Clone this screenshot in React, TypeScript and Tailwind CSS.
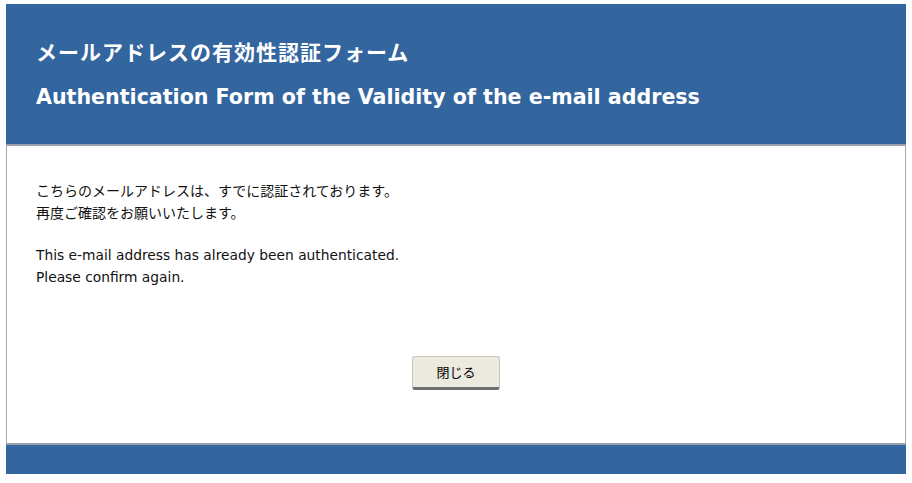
export default function App() {
  return (
    <div className="min-h-screen bg-white pt-[4px] pl-[6px]" style={{ fontFamily: '"DejaVu Sans", Verdana, "Noto Sans CJK JP", sans-serif' }}>
      <div className="w-[900px]">
        {/* Header */}
        <div className="h-[142px] bg-[#33659f] border-b-2 border-[#9aa3ad] pl-[30px] pt-[29px] text-white">
          <h1 className="text-[21px] font-bold leading-[36px] tracking-[1px]" style={{ fontFamily: '"Noto Sans CJK JP", sans-serif' }}>
            メールアドレスの有効性認証フォーム
          </h1>
          <h2 className="mt-[14px] text-[20.6px] font-bold leading-[28px]">
            Authentication Form of the Validity of the e-mail address
          </h2>
        </div>

        {/* Body */}
        <div className="h-[297px] border-x border-[#a8a8a8] px-[29px] pt-[33px] leading-[22px] text-[#111]">
          <p className="text-[14px]" style={{ fontFamily: '"Noto Sans CJK JP", sans-serif' }}>
            こちらのメールアドレスは、すでに認証されております。<br />
            再度ご確認をお願いいたします。
          </p>
          <p className="mt-[21px] text-[13.8px]">
            This e-mail address has already been authenticated.<br />
            Please confirm again.
          </p>
          <div className="mt-[68px] flex justify-center">
            <button className="w-[88px] h-[34px] rounded-[3px] bg-[#ece9df] border border-[#c9c6bb] border-b-[3px] border-b-[#6f6f6f] text-[13px] text-black" style={{ fontFamily: '"Noto Sans CJK JP", sans-serif' }}>
              閉じる
            </button>
          </div>
        </div>

        {/* Footer */}
        <div className="h-[31px] bg-[#33659f] border-t-2 border-[#9aa3ad]" />
      </div>
    </div>
  )
}
